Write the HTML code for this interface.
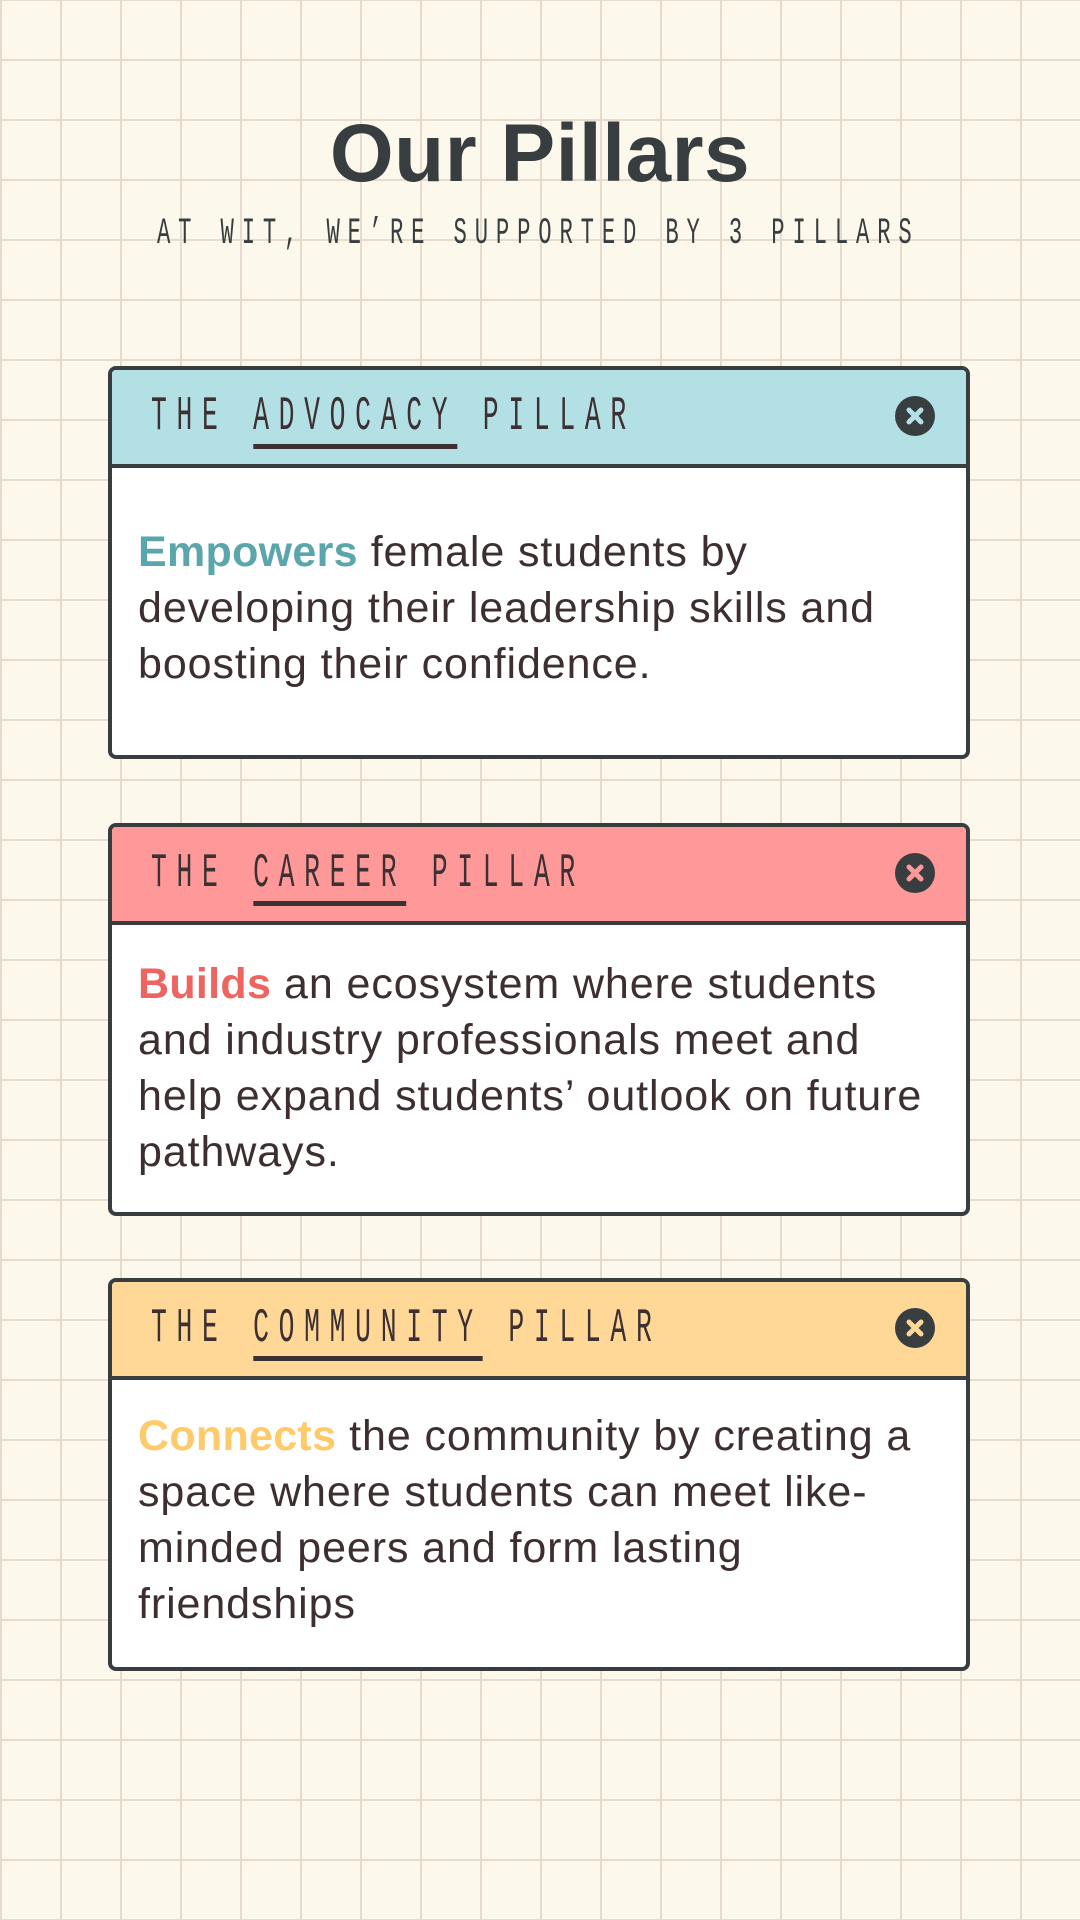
<!DOCTYPE html>
<html><head><meta charset="utf-8"><style>
*{margin:0;padding:0;box-sizing:border-box}
html,body{width:1080px;height:1920px;overflow:hidden}
body{position:relative;background-color:#fdf8ec;
background-image:linear-gradient(to right,#e6dbcd 2px,transparent 2px),linear-gradient(to bottom,#e6dbcd 2px,transparent 2px);
background-size:60px 60px;background-position:0 -1px;font-family:"Liberation Sans",sans-serif}
.title{position:absolute;left:0;width:1080px;top:104px;text-align:center;font-size:82px;font-weight:bold;color:#383d40;line-height:100px;letter-spacing:0.5px}
.px{font-family:"Liberation Mono",monospace;display:inline-block;transform-origin:0 0;white-space:nowrap}
.sub{position:absolute;left:157px;top:212px;font-size:37px;letter-spacing:13.1px;transform:scaleX(0.6);color:#383d40;line-height:44px}
.card{position:absolute;left:108px;width:862px;background:#fff;border:4px solid #383d40;border-radius:8px;overflow:hidden}
.hd{height:98px;border-bottom:4px solid #383d40;position:relative}
.ht{position:absolute;left:39px;top:18px;font-size:48px;letter-spacing:17.6px;transform:scaleX(0.55);color:#3d3032;line-height:58px}
.ht u{text-decoration:none;border-bottom:5px solid #3d3032}
.x{position:absolute;left:783px;top:26px;width:40px;height:40px;border-radius:50%;background:#383d40}
.x svg{position:absolute;left:0;top:0}
.bd{position:absolute;left:26px;right:0;font-size:43px;letter-spacing:0.9px;line-height:56px;color:#3d2f30;white-space:nowrap}
.bd b{font-weight:bold;letter-spacing:0.3px}
</style></head><body>
<div class="title">Our Pillars</div>
<div class="px sub">AT WIT, WE’RE SUPPORTED BY 3 PILLARS</div>

<div class="card" style="top:366px;height:393px">
 <div class="hd" style="background:#b3e0e5"><div class="px ht">THE <u>ADVOCACY</u> PILLAR</div>
 <div class="x"><svg width="40" height="40"><path d="M14 14L26 26M26 14L14 26" stroke="#b3e0e5" stroke-width="5" stroke-linecap="round"/></svg></div></div>
 <div class="bd" style="top:154px"><b style="color:#5ba5ac">Empowers</b> female students by<br>developing their leadership skills and<br>boosting their confidence.</div>
</div>

<div class="card" style="top:823px;height:393px">
 <div class="hd" style="background:#ff9999"><div class="px ht">THE <u>CAREER</u> PILLAR</div>
 <div class="x"><svg width="40" height="40"><path d="M14 14L26 26M26 14L14 26" stroke="#ff9999" stroke-width="5" stroke-linecap="round"/></svg></div></div>
 <div class="bd" style="top:129px"><b style="color:#ee6461">Builds</b> an ecosystem where students<br>and industry professionals meet and<br>help expand students’ outlook on future<br>pathways.</div>
</div>

<div class="card" style="top:1278px;height:393px">
 <div class="hd" style="background:#ffd898"><div class="px ht">THE <u>COMMUNITY</u> PILLAR</div>
 <div class="x"><svg width="40" height="40"><path d="M14 14L26 26M26 14L14 26" stroke="#ffd898" stroke-width="5" stroke-linecap="round"/></svg></div></div>
 <div class="bd" style="top:126px"><b style="color:#ffca6a">Connects</b> the community by creating a<br>space where students can meet like-<br>minded peers and form lasting<br>friendships</div>
</div>
</body></html>
